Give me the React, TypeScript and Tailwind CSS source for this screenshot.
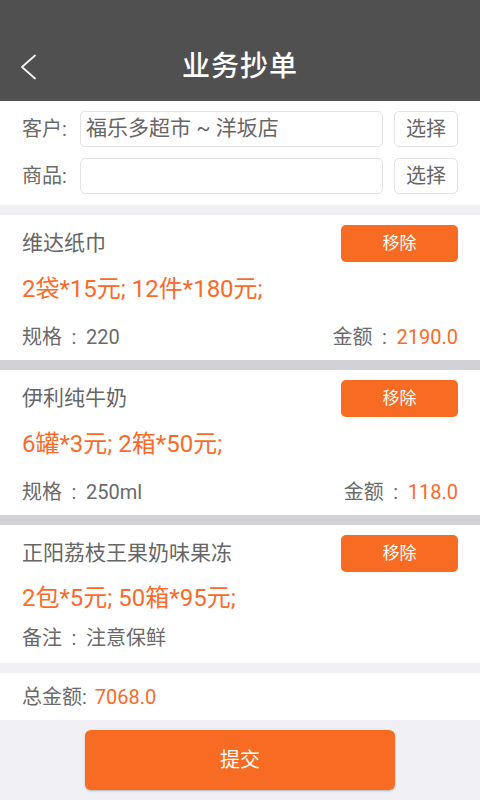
import React from "react";

const font = { fontFamily: 'Roboto, "Noto Sans CJK SC", sans-serif' };

type Item = {
  name: string;
  orders: string;
  leftLabel: string;
  leftValue: string;
  right?: string;
};

const items: Item[] = [
  { name: "维达纸巾", orders: "2袋*15元; 12件*180元;", leftLabel: "规格", leftValue: "220", right: "2190.0" },
  { name: "伊利纯牛奶", orders: "6罐*3元; 2箱*50元;", leftLabel: "规格", leftValue: "250ml", right: "118.0" },
  { name: "正阳荔枝王果奶味果冻", orders: "2包*5元; 50箱*95元;", leftLabel: "备注", leftValue: "注意保鲜" },
];

function Colon() {
  return <span className="inline-block w-[24px] text-center">:</span>;
}

function Card({ item }: { item: Item }) {
  const isLast = !item.right;
  return (
    <div className={`bg-white pl-[22px] pr-[22px] pt-[10px] flex flex-col ${isLast ? "pb-[7px]" : "pb-[4px]"}`}>
      <div className="h-[37px] flex items-center justify-between">
        <span className="text-[21px] text-[#666666] leading-none">{item.name}</span>
        <button className="w-[117px] h-[37px] rounded-[5px] bg-[#f76b22] text-white text-[17px] flex items-center justify-center">
          移除
        </button>
      </div>
      <div className={`flex items-center text-[24px] text-[#fb6a2a] leading-none ${isLast ? "mt-[8px] h-[36px]" : "mt-[8px] h-[38px]"}`}>
        {item.orders}
      </div>
      <div className={`flex items-center justify-between text-[20px] leading-none ${isLast ? "mt-[4px] h-[36px]" : "mt-[10px] h-[38px]"}`}>
        <span className="text-[#6a6a6a] flex items-center">
          {item.leftLabel}
          <Colon />
          {item.leftValue}
        </span>
        {item.right && (
          <span className="text-[#6a6a6a] flex items-center">
            金额
            <Colon />
            <span className="text-[#fb6a2a]">{item.right}</span>
          </span>
        )}
      </div>
    </div>
  );
}

export default function App() {
  return (
    <div style={font} className="w-[480px] h-[800px] bg-[#efeff4] flex flex-col overflow-hidden">
      <header className="h-[101px] bg-[#505050] flex items-end">
        <div className="h-[68px] w-full grid grid-cols-[60px_1fr_60px] items-center">
          <div className="pl-[20px] flex items-center">
            <svg width="16" height="26" viewBox="0 0 16 26" fill="none">
              <polyline points="15,1.5 2,13 15,24.5" stroke="#f4f4f4" strokeWidth="1.8" strokeLinecap="round" strokeLinejoin="round" />
            </svg>
          </div>
          <h1 className="text-center text-white text-[28px] leading-none font-medium tracking-[1px]">业务抄单</h1>
          <div />
        </div>
      </header>

      <section className="bg-white px-[22px] pt-[10px] pb-[11px] flex flex-col gap-[11px]">
        <div className="flex items-center h-[36px]">
          <span className="w-[58px] text-[20px] text-[#6a6a6a]">客户:</span>
          <div className="flex-1 h-[36px] border border-[#e3e3e3] rounded-[5px] flex items-center px-[5px] text-[21px] text-[#666666]">
            福乐多超市 ~ 洋坂店
          </div>
          <button className="ml-[11px] w-[64px] h-[36px] border border-[#e3e3e3] rounded-[5px] text-[20px] text-[#666666] flex items-center justify-center">
            选择
          </button>
        </div>
        <div className="flex items-center h-[36px]">
          <span className="w-[58px] text-[20px] text-[#6a6a6a]">商品:</span>
          <div className="flex-1 h-[36px] border border-[#e3e3e3] rounded-[5px]" />
          <button className="ml-[11px] w-[64px] h-[36px] border border-[#e3e3e3] rounded-[5px] text-[20px] text-[#666666] flex items-center justify-center">
            选择
          </button>
        </div>
      </section>

      <div className="h-[10px] bg-[#efeff4]" />
      <Card item={items[0]} />
      <div className="h-[10px] bg-[#d1d1d6]" />
      <Card item={items[1]} />
      <div className="h-[10px] bg-[#d1d1d6]" />
      <Card item={items[2]} />
      <div className="h-[10px] bg-[#efeff4]" />

      <div className="bg-white h-[47px] px-[22px] flex items-center text-[20px]">
        <span className="text-[#6a6a6a]">总金额:</span>
        <span className="text-[#fb6a2a] ml-[8px]">7068.0</span>
      </div>

      <div className="flex justify-center pt-[10px]">
        <button className="w-[310px] h-[60px] rounded-[6px] bg-[#f76b22] text-white text-[20px] shadow-[0_1px_2px_rgba(0,0,0,0.25)] flex items-center justify-center">
          提交
        </button>
      </div>
    </div>
  );
}
